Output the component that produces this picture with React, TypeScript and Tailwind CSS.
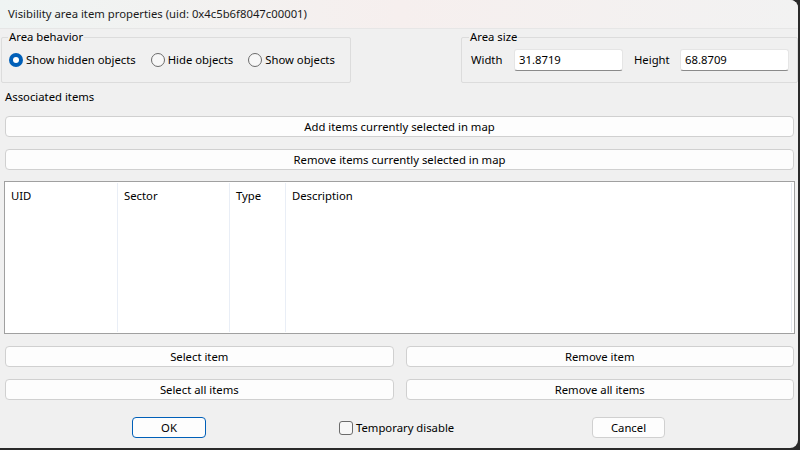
import React from "react";

const font = { fontFamily: '"Segoe UI", "Noto Sans", "Open Sans", sans-serif' };

function Btn({ children, className = "" }: { children: React.ReactNode; className?: string }) {
  return (
    <div
      className={
        "h-[21px] flex items-center justify-center rounded-[4px] border border-[#d0d0d0] bg-[#fdfdfd] text-[11.3px] leading-[16px] text-black whitespace-nowrap " +
        className
      }
    >
      {children}
    </div>
  );
}

function Radio({ checked }: { checked?: boolean }) {
  if (checked)
    return (
      <span className="w-[14px] h-[14px] rounded-full bg-[#005fb8] flex items-center justify-center shrink-0">
        <span className="w-[6px] h-[6px] rounded-full bg-white" />
      </span>
    );
  return <span className="w-[14px] h-[14px] rounded-full border border-[#6b6b6b] bg-[#f7f7f7] shrink-0" />;
}

function Field({ value }: { value: string }) {
  return (
    <div className="w-[109px] h-[22px] shrink-0 bg-white rounded-[3px] border border-[#e5e5e5] border-b-[#8a8a8a] flex items-center pl-[4px] text-[11.3px] leading-[16px] text-black">
      {value}
    </div>
  );
}

export default function App() {
  return (
    <div className="w-[800px] h-[450px] bg-[#2a2a2a] overflow-hidden whitespace-nowrap" style={font}>
      <div className="w-[798px] h-[448px] bg-[#f0f0f0] rounded-tr-[8px] rounded-br-[8px] overflow-hidden flex flex-col text-black">
        {/* Title bar */}
        <div className="h-[29px] shrink-0 bg-gradient-to-r from-[#eff4f3] via-[#f6efee] to-[#f2f2f2] flex items-center pl-[8px] text-[11.3px] leading-[16px] text-[#1a1a1a] border-b border-[#e6e6e6]">
          Visibility area item properties (uid: 0x4c5b6f8047c00001)
        </div>

        {/* Groups row */}
        <div className="flex mt-[8px] h-[46px] shrink-0">
          <div className="relative ml-[1px] w-[350px] h-[46px] border border-[#dcdcdc] rounded-[2px] flex items-center pl-[7px] text-[11.3px] leading-[16px]">
            <span className="absolute left-[6px] top-[-9px] px-[1px] bg-[#f0f0f0] leading-[16px]">Area behavior</span>
            <div className="flex items-center gap-[3px]">
              <Radio checked />
              <span>Show hidden objects</span>
            </div>
            <div className="flex items-center gap-[3px] ml-[15px]">
              <Radio />
              <span>Hide objects</span>
            </div>
            <div className="flex items-center gap-[3px] ml-[15px]">
              <Radio />
              <span>Show objects</span>
            </div>
          </div>
          <div className="relative ml-[110px] flex-1 h-[46px] border border-[#dcdcdc] rounded-[2px] flex items-center pl-[9px] text-[11.3px] leading-[16px]">
            <span className="absolute left-[7px] top-[-9px] px-[1px] bg-[#f0f0f0] leading-[16px]">Area size</span>
            <span className="w-[43px]">Width</span>
            <Field value="31.8719" />
            <span className="ml-[11px] w-[46px]">Height</span>
            <Field value="68.8709" />
          </div>
        </div>

        <div className="mt-[6px] pl-[5px] text-[11.3px] leading-[16px]">Associated items</div>

        <Btn className="mt-[11px] ml-[5px] mr-[4px]">Add items currently selected in map</Btn>
        <Btn className="mt-[12px] ml-[5px] mr-[4px]">Remove items currently selected in map</Btn>

        {/* List */}
        <div className="mt-[11px] ml-[4px] mr-[3px] h-[153px] shrink-0 border border-[#a0a0a0] bg-white flex text-[11.3px] leading-[16px] pt-[1px] pb-[1px]">
          <div className="w-[113px] border-r border-[#e9eef6] pl-[6px] pt-[5px]">UID</div>
          <div className="w-[112px] border-r border-[#e9eef6] pl-[6px] pt-[5px]">Sector</div>
          <div className="w-[56px] border-r border-[#e9eef6] pl-[6px] pt-[5px]">Type</div>
          <div className="flex-1 pl-[6px] pt-[5px] border-r border-[#e4e8ee] mr-[2px]">Description</div>
        </div>

        {/* Bottom buttons */}
        <div className="mt-[12px] ml-[5px] mr-[4px] grid grid-cols-2 gap-x-[12px] gap-y-[12px]">
          <Btn>Select item</Btn>
          <Btn>Remove item</Btn>
          <Btn>Select all items</Btn>
          <Btn>Remove all items</Btn>
        </div>

        {/* OK row */}
        <div className="mt-[17px] flex items-center h-[21px] text-[11.3px] leading-[16px]">
          <div className="ml-[132px] w-[74px] h-[21px] rounded-[4px] border border-[#005fb8] bg-[#fdfdfd] flex items-center justify-center">
            OK
          </div>
          <div className="ml-[133px] flex items-center gap-[3px]">
            <span className="w-[14px] h-[14px] rounded-[3px] border border-[#6b6b6b] bg-[#f7f7f7]" />
            <span>Temporary disable</span>
          </div>
          <div className="ml-auto mr-[133px] w-[73px] h-[21px] rounded-[4px] border border-[#d0d0d0] bg-[#fdfdfd] flex items-center justify-center">
            Cancel
          </div>
        </div>
      </div>
    </div>
  );
}
